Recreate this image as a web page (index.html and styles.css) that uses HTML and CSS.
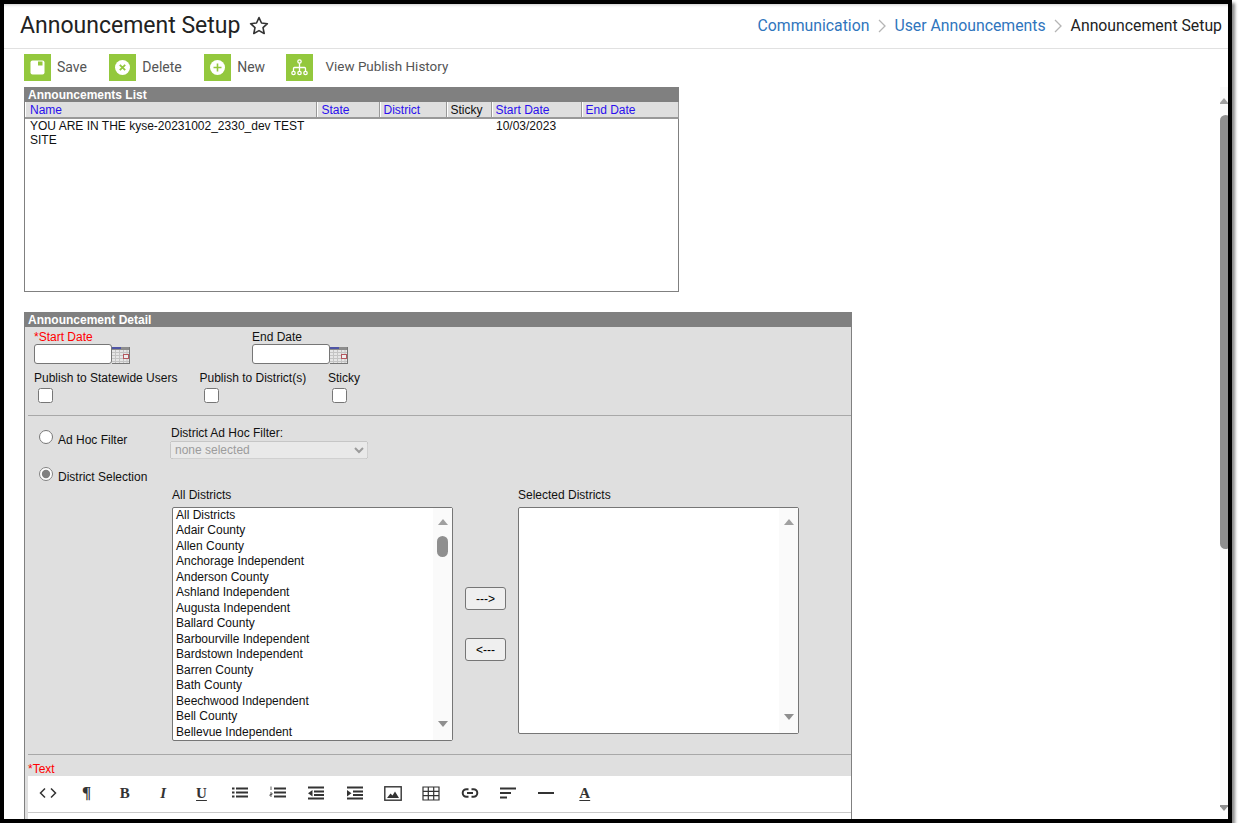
FILE: index.html
```html
<!DOCTYPE html>
<html lang="en">
<head>
  <meta charset="UTF-8">
  <title>Announcement Setup</title>
  <link rel="stylesheet" href="styles.css">
</head>
<body>
<div class="frame">

  <!-- HEADER -->
  <header class="page-header">
    <div class="title-wrap">
      <h1>Announcement Setup</h1>
      <svg class="star" width="20" height="19" viewBox="0 0 20 19"><path d="M10 1.600l2.500 5.400 5.900.7-4.400 4 1.200 5.800-5.200-2.900-5.200 2.900 1.200-5.800-4.400-4 5.900-.7z" fill="none" stroke="#333" stroke-width="1.600" stroke-linejoin="round"/></svg>
    </div>
    <nav class="crumbs">
      <a href="#">Communication</a>
      <svg class="chev" width="8" height="14" viewBox="0 0 8 14"><path d="M1 1l6 6-6 6" fill="none" stroke="#b5b5b5" stroke-width="1.300"/></svg>
      <a href="#">User Announcements</a>
      <svg class="chev" width="8" height="14" viewBox="0 0 8 14"><path d="M1 1l6 6-6 6" fill="none" stroke="#b5b5b5" stroke-width="1.300"/></svg>
      <span>Announcement Setup</span>
    </nav>
  </header>

  <div class="page-body">
    <main class="content">

      <!-- ACTION BAR -->
      <div class="actions">
        <a class="action" href="#">
          <span class="action-icon">
            <svg width="27" height="27" viewBox="0 0 27 27"><path d="M8.500 6.500h10a2 2 0 0 1 2 2v10a2 2 0 0 1-2 2h-10a2 2 0 0 1-2-2v-10a2 2 0 0 1 2-2z" fill="#fff"/><rect x="14" y="7.500" width="4.500" height="4" fill="#93c83d"/></svg>
          </span>
          Save
        </a>
        <a class="action" href="#">
          <span class="action-icon">
            <svg width="27" height="27" viewBox="0 0 27 27"><circle cx="13.500" cy="13.500" r="7.500" fill="#fff"/><path d="M10.800 10.800l5.400 5.400M16.200 10.800l-5.400 5.400" stroke="#93c83d" stroke-width="1.800"/></svg>
          </span>
          Delete
        </a>
        <a class="action" href="#">
          <span class="action-icon">
            <svg width="27" height="27" viewBox="0 0 27 27"><circle cx="13.500" cy="13.500" r="7.500" fill="#fff"/><path d="M13.500 9.500v8M9.500 13.500h8" stroke="#93c83d" stroke-width="1.600"/></svg>
          </span>
          New
        </a>
        <a class="action action-wide" href="#">
          <span class="action-icon">
            <svg width="27" height="27" viewBox="0 0 27 27"><g fill="none" stroke="#fff" stroke-width="1.300"><circle cx="13.500" cy="7.500" r="1.700"/><circle cx="7.500" cy="19" r="1.700"/><circle cx="13.500" cy="19" r="1.700"/><circle cx="19.500" cy="19" r="1.700"/><path d="M13.500 9.200v8M7.500 17.300v-2.800a1 1 0 0 1 1-1h10a1 1 0 0 1 1 1v2.800"/></g></svg>
          </span>
          View Publish History
        </a>
      </div>

      <!-- ANNOUNCEMENTS LIST -->
      <section class="list-panel">
        <h2 class="panel-title">Announcements List</h2>
        <table class="list-table">
          <thead>
            <tr>
              <th class="col-name"><a href="#">Name</a></th>
              <th class="col-state"><a href="#">State</a></th>
              <th class="col-district"><a href="#">District</a></th>
              <th class="col-sticky">Sticky</th>
              <th class="col-start"><a href="#">Start Date</a></th>
              <th class="col-end"><a href="#">End Date</a></th>
            </tr>
          </thead>
          <tbody>
            <tr>
              <td>YOU ARE IN THE kyse-20231002_2330_dev TEST SITE</td>
              <td></td>
              <td></td>
              <td></td>
              <td>10/03/2023</td>
              <td></td>
            </tr>
          </tbody>
        </table>
      </section>

      <!-- ANNOUNCEMENT DETAIL -->
      <section class="detail-panel">
        <h2 class="panel-title">Announcement Detail</h2>

        <div class="date-row">
          <div class="date-field">
            <label class="required">*Start Date</label>
            <div class="date-input">
              <input type="text">
              <svg class="cal" width="18" height="17" viewBox="0 0 18 17"><rect width="18" height="17" fill="#e6e6e6"/><path d="M0 5.500h18M0 8.500h18M0 11.500h18M0 14.500h18M3.500 3v14M7.500 3v14M11.500 3v14M15 3v14" stroke="#c4c4c4"/><rect width="18" height="3" fill="#8d8d8d"/><rect width="9" height="2" fill="#4f55a5"/><rect x="11.500" y="7.500" width="5" height="4" fill="#eee" stroke="#b5575f"/><path d="M17.500 0v17M0 16.500h18" stroke="#777"/></svg>
            </div>
          </div>
          <div class="date-field">
            <label>End Date</label>
            <div class="date-input">
              <input type="text">
              <svg class="cal" width="18" height="17" viewBox="0 0 18 17"><rect width="18" height="17" fill="#e6e6e6"/><path d="M0 5.500h18M0 8.500h18M0 11.500h18M0 14.500h18M3.500 3v14M7.500 3v14M11.500 3v14M15 3v14" stroke="#c4c4c4"/><rect width="18" height="3" fill="#8d8d8d"/><rect width="9" height="2" fill="#4f55a5"/><rect x="11.500" y="7.500" width="5" height="4" fill="#eee" stroke="#b5575f"/><path d="M17.500 0v17M0 16.500h18" stroke="#777"/></svg>
            </div>
          </div>
        </div>

        <div class="check-row">
          <div class="check-field check-state">
            <label>Publish to Statewide Users</label>
            <input type="checkbox">
          </div>
          <div class="check-field check-district">
            <label>Publish to District(s)</label>
            <input type="checkbox">
          </div>
          <div class="check-field">
            <label>Sticky</label>
            <input type="checkbox">
          </div>
        </div>

        <hr class="divider">

        <div class="filter-row">
          <label class="choice"><input type="radio" name="mode"><span>Ad Hoc Filter</span></label>
          <div class="filter-select">
            <label>District Ad Hoc Filter:</label>
            <select disabled><option>none selected</option></select>
          </div>
        </div>
        <div class="selection-row">
          <label class="choice"><input type="radio" name="mode" checked><span>District Selection</span></label>
        </div>

        <div class="district-lists">
          <div class="district-col">
            <label>All Districts</label>
            <div class="listbox">
              <ul>
                <li>All Districts</li>
                <li>Adair County</li>
                <li>Allen County</li>
                <li>Anchorage Independent</li>
                <li>Anderson County</li>
                <li>Ashland Independent</li>
                <li>Augusta Independent</li>
                <li>Ballard County</li>
                <li>Barbourville Independent</li>
                <li>Bardstown Independent</li>
                <li>Barren County</li>
                <li>Bath County</li>
                <li>Beechwood Independent</li>
                <li>Bell County</li>
                <li>Bellevue Independent</li>
              </ul>
              <div class="scroll">
                <span class="arrow-up"></span>
                <span class="thumb"></span>
                <span class="arrow-down"></span>
              </div>
            </div>
          </div>
          <div class="mover">
            <button type="button">---&gt;</button>
            <button type="button">&lt;---</button>
          </div>
          <div class="district-col">
            <label>Selected Districts</label>
            <div class="listbox listbox-short">
              <ul></ul>
              <div class="scroll">
                <span class="arrow-up"></span>
                <span class="arrow-down"></span>
              </div>
            </div>
          </div>
        </div>

        <hr class="divider divider-text">

        <label class="required text-label">*Text</label>

        <!-- EDITOR -->
        <div class="editor-bar">
          <span class="tool"><svg width="18" height="14" viewBox="0 0 18 14"><path d="M6 2.500L1.500 7 6 11.500M12 2.500L16.500 7 12 11.500" fill="none" stroke="#333" stroke-width="1.500"/></svg></span>
          <span class="tool glyph glyph-para">¶</span>
          <span class="tool glyph">B</span>
          <span class="tool glyph glyph-italic">I</span>
          <span class="tool glyph glyph-under">U</span>
          <span class="tool"><svg width="18" height="14" viewBox="0 0 18 14"><path d="M5 2.500h12M5 6.500h12M5 10.500h12" stroke="#333" stroke-width="2"/><path d="M1 2.500h2.500M1 6.500h2.500M1 10.500h2.500" stroke="#333" stroke-width="2"/></svg></span>
          <span class="tool"><svg width="18" height="14" viewBox="0 0 18 14"><path d="M5 2.500h12M5 6.500h12M5 10.500h12" stroke="#333" stroke-width="2"/><path d="M2 0.500v3.500M1 7h2v1.500H1v1.500h2" fill="none" stroke="#333" stroke-width=".8"/></svg></span>
          <span class="tool"><svg width="18" height="14" viewBox="0 0 18 14"><path d="M1 1.500h16M7 5.500h10M7 9h10M1 12.500h16" stroke="#333" stroke-width="2"/><path d="M5.500 4v6.500L1 7.200z" fill="#333"/></svg></span>
          <span class="tool"><svg width="18" height="14" viewBox="0 0 18 14"><path d="M1 1.500h16M7 5.500h10M7 9h10M1 12.500h16" stroke="#333" stroke-width="2"/><path d="M1 4v6.500l4.500-3.300z" fill="#333"/></svg></span>
          <span class="tool"><svg width="18" height="15" viewBox="0 0 18 15"><rect x=".8" y=".8" width="16.400" height="13.400" fill="#fff" stroke="#333" stroke-width="1.400"/><path d="M3 12l3.500-4.500 2 2L11 5.500l4 6.500z" fill="#333"/></svg></span>
          <span class="tool"><svg width="18" height="15" viewBox="0 0 18 15"><path d="M1 1h16v13H1zM1 5.300h16M1 9.600h16M6.300 1v13M11.700 1v13" fill="none" stroke="#333" stroke-width="1.200"/></svg></span>
          <span class="tool"><svg width="18" height="12" viewBox="0 0 18 12"><path d="M7.500 2.200H5.500a3.800 3.800 0 0 0 0 7.600h2M10.500 2.200h2a3.800 3.800 0 0 1 0 7.600h-2M6 6h6" fill="none" stroke="#333" stroke-width="2"/></svg></span>
          <span class="tool"><svg width="18" height="14" viewBox="0 0 18 14"><path d="M1 2.500h16M1 7h11M1 11.500h7" stroke="#333" stroke-width="2.200"/></svg></span>
          <span class="tool"><svg width="18" height="14" viewBox="0 0 18 14"><path d="M1 7h16" stroke="#333" stroke-width="2"/></svg></span>
          <span class="tool glyph glyph-color">A</span>
        </div>
        <div class="editor-body"></div>
      </section>
    </main>

    <!-- PAGE SCROLLBAR -->
    <div class="page-scroll">
      <span class="arrow-up"></span>
      <span class="page-thumb"></span>
      <span class="arrow-down"></span>
    </div>
  </div>
</div>
</body>
</html>
```

FILE: styles.css
```css
* {
  box-sizing: border-box;
}

body {
  margin: 0;
  background: #fff;
  font-family: "Liberation Sans", Arial, sans-serif;
  font-size: 12px;
  color: #111;
}

/* --- OUTER FRAME --- */
.frame {
  width: 1232px;
  height: 823px;
  border: 4px solid #000;
  box-shadow: 3px 3px 3px #8a8a8a;
  background: #fff;
  overflow: hidden;
  display: flex;
  flex-direction: column;
}

/* --- HEADER --- */
.page-header {
  height: 45px;
  flex: none;
  display: flex;
  justify-content: space-between;
  align-items: center;
  padding: 0 6px 1px 16px;
  border-bottom: 1px solid #e1e1e1;
  box-shadow: inset 0 3px 3px -2px #ccc;
  font-family: Roboto, sans-serif;
}

.title-wrap {
  display: flex;
  align-items: center;
  gap: 9px;
}

.title-wrap h1 {
  margin: 0;
  font-size: 23px;
  font-weight: 400;
  color: #222;
}

.crumbs {
  display: flex;
  align-items: center;
  gap: 8.5px;
  font-size: 15.8px;
  color: #222;
}

.crumbs a {
  color: #2f75bd;
  text-decoration: none;
}

.page-body {
  flex: 1;
  min-height: 0;
  display: flex;
}

.content {
  flex: 1;
  min-width: 0;
  padding-left: 20px;
  overflow: hidden;
}

/* --- ACTION BAR --- */
.actions {
  height: 38px;
  padding-top: 5px;
  display: flex;
  align-items: flex-start;
  gap: 22.4px;
}

.action {
  display: flex;
  align-items: flex-start;
  gap: 6px;
  height: 27px;
  font-family: Roboto, sans-serif;
  font-size: 14px;
  line-height: 26px;
  color: #555;
  text-decoration: none;
}

.action-wide {
  gap: 13px;
  margin-left: -2px;
  font-size: 13.45px;
}

.action-icon {
  width: 27px;
  height: 27px;
  background: #93c83d;
  display: block;
}

.action-icon svg {
  display: block;
}

/* --- PANELS --- */
.panel-title {
  margin: 0;
  height: 15px;
  padding-left: 4px;
  background: #808080;
  color: #fff;
  font-size: 12px;
  font-weight: bold;
  line-height: 17px;
  overflow: hidden;
}

.list-panel {
  width: 655px;
  height: 205px;
  border: 1px solid #808080;
  border-top: 0;
  margin-bottom: 20px;
}

.list-panel .panel-title {
  margin: 0 -1px;
}

.list-table {
  width: 100%;
  table-layout: fixed;
  border-collapse: collapse;
}

.list-table th {
  height: 16px;
  padding: 0 0 0 4px;
  background: #dfdfdf;
  border-bottom: 2px solid #999;
  border-right: 1px solid #999;
  box-shadow: inset 1px 0 0 #fff;
  font-weight: normal;
  text-align: left;
  line-height: 14px;
}

.list-table th.col-name,
.list-table th.col-state {
  padding-left: 5px;
}

.list-table th a {
  color: #2a0fee;
  text-decoration: none;
}

.list-table td {
  padding: 0 4px 0 5px;
  vertical-align: top;
  line-height: 14px;
}

.col-name { width: 291px; }
.col-state { width: 63px; }
.col-district { width: 67px; }
.col-sticky { width: 45px; }
.col-start { width: 90px; }
.col-end { width: 97px; }

.detail-panel {
  width: 828px;
  height: 520px;
  background: #dfdfdf;
  border: 1px solid #808080;
  border-top: 0;
}

.detail-panel .panel-title {
  margin: 0 -1px;
}

.required {
  color: #f00;
}

/* --- DATE AND CHECK ROWS --- */
.date-row {
  display: flex;
  padding: 3px 0 0 9px;
}

.date-field {
  width: 218px;
}

.date-field label {
  display: block;
  height: 14px;
  line-height: 14px;
}

.date-input {
  display: flex;
  align-items: flex-end;
}

.date-input input {
  width: 78px;
  height: 20px;
  margin: 0;
  padding: 0 3px;
  background: #fff;
  border: 1px solid #767676;
  border-radius: 3px;
}

.cal {
  display: block;
}

.check-row {
  display: flex;
  padding: 7px 0 0 9px;
}

.check-field label {
  display: block;
  height: 14px;
  line-height: 14px;
}

.check-field input {
  display: block;
  width: 15px;
  height: 15px;
  margin: 3px 0 0 4px;
}

.check-state {
  width: 165.5px;
}

.check-district {
  width: 128.5px;
}

.divider {
  height: 1px;
  margin: 12px 0 0 3px;
  border: 0;
  background: #a8a8a8;
}

/* --- FILTER CHOICES --- */
.filter-row {
  display: flex;
  padding: 10px 0 0 14px;
}

.choice {
  display: flex;
  align-items: flex-start;
  gap: 5px;
  width: 132px;
  height: 16px;
  margin-top: 4px;
  line-height: 20px;
}

.choice input {
  width: 14px;
  height: 14px;
  margin: 0;
  accent-color: #808080;
}

.filter-select label {
  display: block;
  height: 15px;
  line-height: 14px;
}

.filter-select select {
  display: block;
  width: 198px;
  height: 18px;
  margin-left: -1px;
  font-family: "Liberation Sans", Arial, sans-serif;
  font-size: 12px;
}

.selection-row {
  padding: 4px 0 0 14px;
}

/* --- DISTRICT LISTS --- */
.district-lists {
  display: flex;
  padding: 5px 0 0 147px;
}

.district-col {
  width: 281px;
}

.district-col label {
  display: block;
  height: 19px;
  line-height: 15px;
}

.listbox {
  height: 234px;
  display: flex;
  background: #fff;
  border: 1px solid #767676;
  border-radius: 2px;
}

.listbox-short {
  height: 227px;
}

.listbox ul {
  flex: 1;
  margin: -0.25px 0 0;
  padding: 0 0 0 3px;
  list-style: none;
}

.listbox li {
  height: 15.5px;
  line-height: 15.5px;
}

.scroll {
  width: 19px;
  padding: 11px 0 13px;
  background: #fafafa;
  display: flex;
  flex-direction: column;
  align-items: center;
}

.arrow-up,
.arrow-down {
  width: 0;
  height: 0;
  flex: none;
  border-left: 5.5px solid transparent;
  border-right: 5.5px solid transparent;
}

.arrow-up {
  border-bottom: 6px solid #a0a0a0;
}

.arrow-down {
  margin-top: auto;
  border-top: 6px solid #8f8f8f;
}

.thumb {
  width: 11px;
  height: 21px;
  margin-top: 11px;
  border-radius: 5.5px;
  background: #8f8f8f;
}

.mover {
  width: 65px;
  padding: 99px 0 0 12px;
  display: flex;
  flex-direction: column;
  gap: 28px;
}

.mover button {
  width: 41px;
  height: 23px;
  padding: 0;
  background: #efefef;
  border: 1px solid #767676;
  border-radius: 3px;
  font-family: "Liberation Sans", Arial, sans-serif;
  font-size: 12px;
  color: #000;
}

/* --- EDITOR --- */
.divider-text {
  margin-top: 13px;
}

.text-label {
  display: block;
  height: 21px;
  padding: 7px 0 0 3px;
  line-height: 14px;
}

.editor-bar {
  height: 37px;
  margin-left: 3px;
  padding: 0 0 2px 1px;
  display: flex;
  align-items: center;
  background: #fff;
  border-bottom: 1px solid #c9c9c9;
}

.editor-body {
  height: 40px;
  margin-left: 3px;
  background: #fff;
}

.tool {
  width: 38.33px;
  height: 34px;
  display: flex;
  justify-content: center;
  align-items: center;
}

.glyph {
  font-family: "Liberation Serif", serif;
  font-size: 15px;
  font-weight: bold;
  color: #333;
}

.glyph-para {
  font-size: 17px;
}

.glyph-italic {
  font-style: italic;
}

.glyph-under,
.glyph-color {
  text-decoration: underline;
  text-underline-offset: 2px;
}

/* --- PAGE SCROLLBAR --- */
.page-scroll {
  width: 8px;
  flex: none;
  margin-top: 38px;
  padding: 11px 0 8px;
  background: #fafafa;
  display: flex;
  flex-direction: column;
  align-items: center;
  overflow: hidden;
}

.page-thumb {
  width: 11px;
  height: 434px;
  flex: none;
  margin-top: 11px;
  align-self: flex-start;
  border-radius: 5.5px;
  background: #8f8f8f;
}
```
